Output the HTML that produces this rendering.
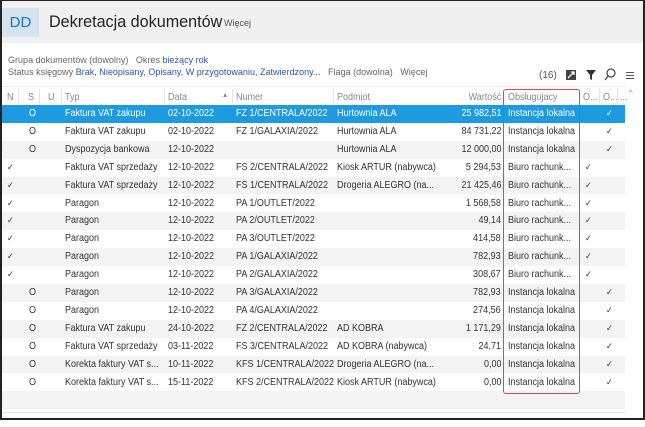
<!DOCTYPE html><html><head><meta charset="utf-8"><style>
*{margin:0;padding:0;box-sizing:border-box}
body{width:645px;height:420px;overflow:hidden;background:#fff;font-family:"Liberation Sans",sans-serif;font-size:10px;color:#333;position:relative}
.frame{position:absolute;inset:0;border:2px solid #222;border-top:1px solid #222;pointer-events:none;z-index:9}
.top{position:absolute;left:0;top:0;width:645px;height:43px;background:#f0f0f0}
.dd{position:absolute;left:2px;top:8px;width:37px;height:29px;background:#d5e3ee;color:#1e73be;font-size:15px;text-align:center;line-height:29px}
.title{position:absolute;left:49px;top:12px;font-size:17px;color:#222;transform:scaleX(.95);transform-origin:left}
.more{position:absolute;left:224px;top:18px;font-size:9px;color:#555}
.f{position:absolute;font-size:9.5px;color:#666;white-space:nowrap;transform:scaleX(.95);transform-origin:left}
.f b{font-weight:normal;color:#2a55b8}
.t{position:absolute;white-space:nowrap;transform:scaleX(.9);transform-origin:left}
.r{transform-origin:right}
.row{position:absolute;left:2px;width:623px;height:18px}
.hdr{color:#888}
.sep{position:absolute;top:89px;width:1px;height:14px;background:#e2e2e2}
</style></head><body>
<div class="top"><div class="dd">DD</div><div class="title">Dekretacja dokumentów</div><div class="more">Więcej</div></div>
<div class="f" style="left:8px;top:55px">Grupa dokumentów (dowolny) &nbsp; Okres <b>bieżący rok</b></div>
<div class="f" style="left:8px;top:67px">Status księgowy <b>Brak, Nieopisany, Opisany, W przygotowaniu, Zatwierdzony...</b> &nbsp; Flaga (dowolna) &nbsp; Więcej</div>
<div class="f" style="left:539px;top:70px;font-size:10px;color:#555;transform:none">(16)</div>
<svg style="position:absolute;left:565px;top:69px" width="12" height="12"><rect x="1" y="1" width="10" height="10" fill="#444"/><path d="M3 9L9 3M6 3h3v3" stroke="#fff" stroke-width="1.3" fill="none"/></svg>
<svg style="position:absolute;left:585px;top:69px" width="12" height="12"><path d="M1 1h10L7 6v5L5 10V6z" fill="#333"/></svg>
<svg style="position:absolute;left:604px;top:68px" width="12" height="13"><circle cx="7" cy="5" r="4" stroke="#444" stroke-width="1.2" fill="none"/><path d="M4 8L1 12" stroke="#444" stroke-width="1.3"/></svg>
<svg style="position:absolute;left:625px;top:71px" width="10" height="9"><path d="M1 1.5h8M1 4.5h8M1 7.5h8" stroke="#555" stroke-width="1"/></svg>
<div id="g"></div>
<div style="position:absolute;left:2px;top:86px;width:623px;height:1px;background:#eee"></div>
<div style="position:absolute;left:503px;top:89px;width:77px;height:305px;border:1.5px solid #e0474c;border-radius:3px;z-index:5"></div>
<div class="t" style="left:629px;top:88px;color:#999;font-size:9px">^</div>
<div style="position:absolute;left:2px;top:412px;width:623px;height:1px;background:#e6e6e6"></div>
<div class="frame"></div>
<script>
var rows=[
["","O","Faktura VAT zakupu","02-10-2022","FZ 1/CENTRALA/2022","Hurtownia ALA","25 982,51","Instancja lokalna","","✓"],
["","O","Faktura VAT zakupu","02-10-2022","FZ 1/GALAXIA/2022","Hurtownia ALA","84 731,22","Instancja lokalna","","✓"],
["","O","Dyspozycja bankowa","12-10-2022","","Hurtownia ALA","12 000,00","Instancja lokalna","","✓"],
["✓","","Faktura VAT sprzedaży","12-10-2022","FS 2/CENTRALA/2022","Kiosk ARTUR (nabywca)","5 294,53","Biuro rachunk...","✓",""],
["✓","","Faktura VAT sprzedaży","12-10-2022","FS 1/CENTRALA/2022","Drogeria ALEGRO (na...","21 425,46","Biuro rachunk...","✓",""],
["✓","","Paragon","12-10-2022","PA 1/OUTLET/2022","","1 568,58","Biuro rachunk...","✓",""],
["✓","","Paragon","12-10-2022","PA 2/OUTLET/2022","","49,14","Biuro rachunk...","✓",""],
["✓","","Paragon","12-10-2022","PA 3/OUTLET/2022","","414,58","Biuro rachunk...","✓",""],
["✓","","Paragon","12-10-2022","PA 1/GALAXIA/2022","","782,93","Biuro rachunk...","✓",""],
["✓","","Paragon","12-10-2022","PA 2/GALAXIA/2022","","308,67","Biuro rachunk...","✓",""],
["","O","Paragon","12-10-2022","PA 3/GALAXIA/2022","","782,93","Instancja lokalna","","✓"],
["","O","Paragon","12-10-2022","PA 4/GALAXIA/2022","","274,56","Instancja lokalna","","✓"],
["","O","Faktura VAT zakupu","24-10-2022","FZ 2/CENTRALA/2022","AD KOBRA","1 171,29","Instancja lokalna","","✓"],
["","O","Faktura VAT sprzedaży","03-11-2022","FS 3/CENTRALA/2022","AD KOBRA (nabywca)","24,71","Instancja lokalna","","✓"],
["","O","Korekta faktury VAT s...","10-11-2022","KFS 1/CENTRALA/2022","Drogeria ALEGRO (na...","0,00","Instancja lokalna","","✓"],
["","O","Korekta faktury VAT s...","15-11-2022","KFS 2/CENTRALA/2022","Kiosk ARTUR (nabywca)","0,00","Instancja lokalna","","✓"]];
var h='';
var H=[["N",7],["S",28],["U",48],["Typ",65],["Data",168],["Numer",236],["Podmiot",337],["Obsługujacy",508],["O...",583],["O...",603],["...",620]];
H.forEach(function(c){h+='<div class="t hdr" style="left:'+c[1]+'px;top:92px">'+c[0]+'</div>'});
h+='<div class="t hdr r" style="right:144px;top:92px">Wartość</div><div class="t hdr" style="left:222px;top:92px;font-size:7px">▲</div>';
[18,39,61,164,232,333,503,579,599,617].forEach(function(x){h+='<div class="sep" style="left:'+x+'px"></div>'});
var rh=17.9;
for(var i=0;i<18;i++){var y=105+i*rh;var bg=i==0?'#1d9ae0':(i%2==0?'#f3f3f3':'#fff');h+='<div class="row" style="top:'+y+'px;height:'+rh+'px;background:'+bg+'"></div>';}
rows.forEach(function(r,i){var y=105+i*rh+3;var c=i==0?'#fff':'#333';var s='color:'+c+';top:'+y+'px;';
h+='<div class="t" style="'+s+'left:7px;font-size:9px">'+r[0]+'</div>';
h+='<div class="t" style="'+s+'left:29px">'+r[1]+'</div>';
h+='<div class="t" style="'+s+'left:65px">'+r[2]+'</div>';
h+='<div class="t" style="'+s+'left:168px">'+r[3]+'</div>';
h+='<div class="t" style="'+s+'left:236px">'+r[4]+'</div>';
h+='<div class="t" style="'+s+'left:337px">'+r[5]+'</div>';
h+='<div class="t r" style="'+s+'right:144px">'+r[6]+'</div>';
h+='<div class="t" style="'+s+'left:508px">'+r[7]+'</div>';
h+='<div class="t" style="'+s+'left:585px;font-size:9px">'+r[8]+'</div>';
h+='<div class="t" style="'+s+'left:606px;font-size:9px">'+r[9]+'</div>';});
document.getElementById('g').innerHTML=h;
</script>
</body></html>
